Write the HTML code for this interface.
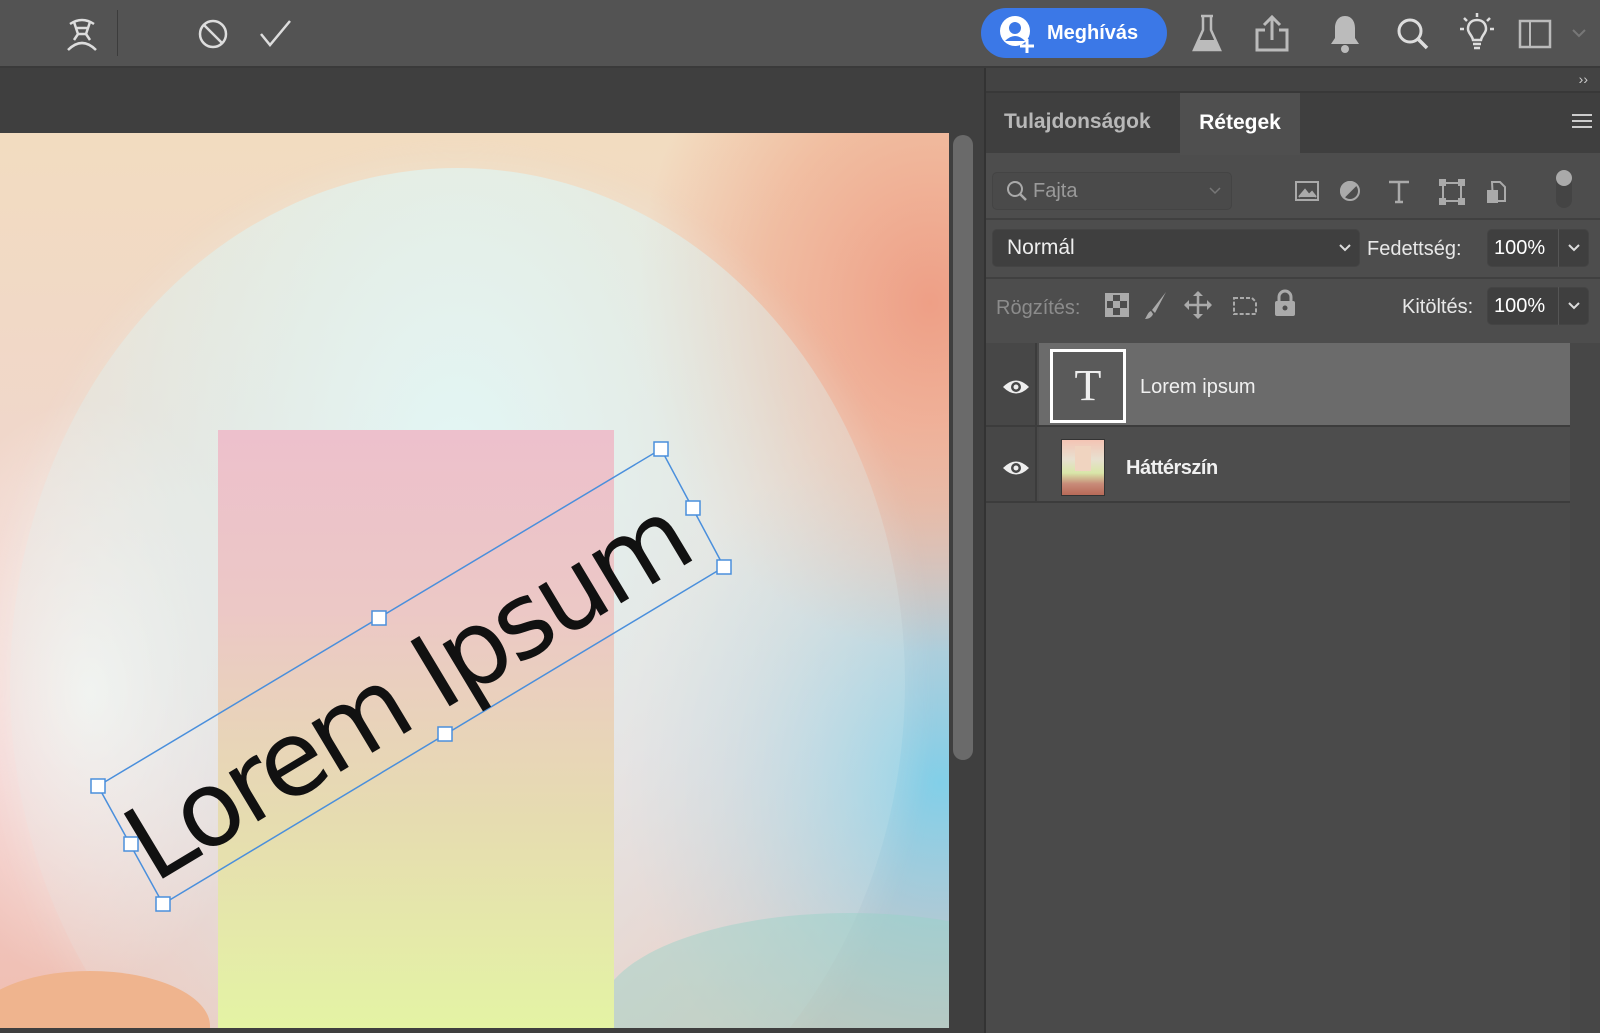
<!DOCTYPE html>
<html><head><meta charset="utf-8"><style>
*{margin:0;padding:0;box-sizing:border-box}
html,body{width:1600px;height:1033px;overflow:hidden}
body{background:#3f3f3f;font-family:"Liberation Sans",sans-serif;position:relative}
.abs{position:absolute}
#top{left:0;top:0;width:1600px;height:68px;background:#535353;border-bottom:2px solid #3a3a3a}
#btn{left:981px;top:8px;width:186px;height:50px;border-radius:25px;background:#3b78e7;color:#fff;font-size:20px;font-weight:bold;line-height:50px;padding-left:66px}
#canvas{left:0;top:133px;width:949px;height:895px;overflow:hidden;
background:
radial-gradient(ellipse 260px 420px at 90px 560px, rgba(255,250,245,.85), rgba(255,255,255,0) 70%),
radial-gradient(ellipse 420px 500px at 930px 170px, #ee9f86 0%, rgba(240,170,140,.6) 40%, rgba(255,255,255,0) 70%),
radial-gradient(ellipse 350px 400px at 940px 650px, #82cfe8 0%, rgba(130,205,230,.3) 60%, rgba(255,255,255,0) 90%),
linear-gradient(180deg,#f2dcc0 0%,#f0d6cc 40%,#f2c8c8 70%,#efbfb1 100%)}
#circle{left:10px;top:35px;width:895px;height:1030px;border-radius:50%;background:radial-gradient(ellipse at 50% 30%, rgba(225,250,250,.9) 0%, rgba(220,245,245,.55) 45%, rgba(225,240,240,.2) 80%);box-shadow:0 0 30px 10px rgba(230,245,245,.15)}
#rect{left:218px;top:297px;width:396px;height:600px;background:linear-gradient(180deg,#edc0cc 0%,#ecc8c6 30%,#e6dcb0 65%,#e4f4a4 100%)}
#panel{left:984px;top:68px;width:616px;height:965px;background:#4d4d4d;border-left:2px solid #333;overflow:hidden}
.ic{stroke:#ddd;fill:none;stroke-width:2.5}
.lbl{color:#e8e8e8;font-size:20px}
</style></head><body>
<div id="top" class="abs">
 <svg class="abs" style="left:64px;top:14px" width="36" height="38" viewBox="0 0 36 38"><g class="ic" stroke-width="2.5"><path d="M6 10 Q18 2 30 10"/><path d="M10 8 L14 20 L22 20 L26 8"/><path d="M13 14h10"/><path d="M14 20 L10 26"/><path d="M22 20 L26 26"/><path d="M4 36 Q18 22 32 36"/></g></svg>
 <div class="abs" style="left:117px;top:10px;width:1px;height:46px;background:#3c3c3c"></div>
 <svg class="abs" style="left:196px;top:17px" width="34" height="34" viewBox="0 0 34 34"><circle cx="17" cy="17" r="13" class="ic" stroke-width="3"/><path d="M8 8 L26 26" class="ic" stroke-width="3"/></svg>
 <svg class="abs" style="left:258px;top:17px" width="36" height="32" viewBox="0 0 36 32"><path d="M3 17 L12 28 L32 4" class="ic" stroke-width="3"/></svg>
 <div id="btn" class="abs">Meghívás
  <svg class="abs" style="left:18px;top:7px" width="40" height="40" viewBox="0 0 40 40"><circle cx="16" cy="16" r="15" fill="#fff"/><circle cx="16" cy="13" r="6" fill="#3b78e7"/><path d="M6 26 Q16 16 26 26" fill="#3b78e7"/><path d="M28 24v14M21 31h14" stroke="#fff" stroke-width="3"/></svg>
 </div>
 <svg class="abs" style="left:1191px;top:14px" width="32" height="40" viewBox="0 0 32 40"><path d="M10 2h12M12 2v14L3 36h26L20 16V2" fill="none" stroke="#bbb" stroke-width="2.5"/><path d="M7 26h18l4 10H3z" fill="#bbb"/></svg>
 <svg class="abs" style="left:1254px;top:14px" width="36" height="38" viewBox="0 0 36 38"><path d="M11 16H3v20h30V16h-8" fill="none" stroke="#bbb" stroke-width="3"/><path d="M18 26V3M10 11l8-8 8 8" fill="none" stroke="#bbb" stroke-width="3"/></svg>
 <svg class="abs" style="left:1329px;top:14px" width="32" height="40" viewBox="0 0 32 40"><path d="M16 2c-7 0-10 6-10 12v10l-4 6h28l-4-6V14c0-6-3-12-10-12z" fill="#bbb"/><circle cx="16" cy="35" r="4" fill="#bbb"/></svg>
 <svg class="abs" style="left:1396px;top:17px" width="34" height="34" viewBox="0 0 34 34"><circle cx="14" cy="14" r="11" fill="none" stroke="#ddd" stroke-width="3"/><path d="M22 22l9 9" stroke="#ddd" stroke-width="3.5"/></svg>
 <svg class="abs" style="left:1459px;top:12px" width="36" height="40" viewBox="0 0 36 40"><path d="M18 8c-6 0-9 4-9 9 0 4 4 6 5 11h8c1-5 5-7 5-11 0-5-3-9-9-9z" fill="none" stroke="#ddd" stroke-width="2.5"/><path d="M14 32h8M15 36h6M18 1v4M5 6l3 3M31 6l-3 3M1 17h4M31 17h4" stroke="#ddd" stroke-width="2.5"/></svg>
 <svg class="abs" style="left:1518px;top:19px" width="34" height="30" viewBox="0 0 34 30"><rect x="2" y="2" width="30" height="26" fill="none" stroke="#bbb" stroke-width="2.5"/><path d="M12 2v26" stroke="#bbb" stroke-width="2"/></svg>
 <svg class="abs" style="left:1571px;top:27px" width="16" height="12" viewBox="0 0 16 12"><path d="M2 3l6 6 6-6" fill="none" stroke="#777" stroke-width="2"/></svg>
</div>

<div id="canvas" class="abs">
 <div id="circle" class="abs"></div>
 <div class="abs" style="left:600px;top:780px;width:500px;height:200px;border-radius:50%;background:rgba(150,210,200,.45)"></div>
 <div class="abs" style="left:-30px;top:838px;width:240px;height:110px;border-radius:50%;background:#efb48e"></div>
 <div id="rect" class="abs"></div>
 <svg class="abs" style="left:0;top:0" width="949" height="895">
  <polygon points="98,653 661,316 724,434 163,771" fill="none" stroke="#4a8fdc" stroke-width="1.5"/>
  <g fill="#fff" stroke="#4a8fdc" stroke-width="1.5">
   <rect x="654" y="309" width="14" height="14"/><rect x="717" y="427" width="14" height="14"/>
   <rect x="156" y="764" width="14" height="14"/><rect x="91" y="646" width="14" height="14"/>
   <rect x="372" y="478" width="14" height="14"/><rect x="438" y="594" width="14" height="14"/>
   <rect x="686" y="368" width="14" height="14"/><rect x="124" y="704" width="14" height="14"/>
  </g>
 </svg>
 <div class="abs" style="left:79px;top:490px;width:656px;height:135px;transform:rotate(-31deg);font-size:104px;line-height:135px;color:#111;text-align:center;white-space:nowrap;font-family:'DejaVu Sans',sans-serif;letter-spacing:-4px">Lorem Ipsum</div>
</div>
<div class="abs" style="left:953px;top:135px;width:20px;height:625px;border-radius:10px;background:#6a6a6a"></div>

<div id="panel" class="abs">
 <div class="abs" style="left:0;top:0;width:616px;height:25px;background:#434343;border-bottom:2px solid #383838;color:#ccc;font-size:14px;text-align:right;padding-right:14px;line-height:22px">››</div>
 <div class="abs" style="left:0;top:25px;width:616px;height:60px;background:#3f3f3f"></div>
 <div class="abs" style="left:18px;top:42px;color:#b8b8b8;font-size:21px;font-weight:bold">Tulajdonságok</div>
 <div class="abs" style="left:194px;top:25px;width:120px;height:62px;background:#4f4f4f;color:#fff;font-size:21px;font-weight:bold;text-align:center;line-height:60px">Rétegek</div>
 <div class="abs" style="left:586px;top:46px;width:20px;height:14px;border-top:2px solid #ccc;border-bottom:2px solid #ccc"></div>
 <div class="abs" style="left:586px;top:52px;width:20px;height:2px;background:#ccc"></div>
 <div class="abs" style="left:6px;top:104px;width:240px;height:38px;border:1px solid #444;border-radius:5px;background:#4a4a4a;color:#9a9a9a;font-size:20px;line-height:36px;padding-left:40px">Fajta</div>
 <svg class="abs" style="left:20px;top:112px" width="22" height="22" viewBox="0 0 22 22"><circle cx="9" cy="9" r="7" fill="none" stroke="#aaa" stroke-width="2"/><path d="M14 14l6 6" stroke="#aaa" stroke-width="2.5"/></svg>
 <svg class="abs" style="left:222px;top:118px" width="14" height="10"><path d="M2 2l5 5 5-5" fill="none" stroke="#777" stroke-width="1.5"/></svg>
 <svg class="abs" style="left:308px;top:110px" width="230" height="28" viewBox="0 0 230 28">
  <g fill="none" stroke="#aaa" stroke-width="2"><rect x="2" y="4" width="22" height="18"/><path d="M5 19l6-7 4 5 3-3 4 5" fill="#aaa"/>
  <circle cx="56" cy="13" r="9"/><path d="M56 4a9 9 0 0 0 0 18z" fill="#aaa" transform="rotate(45 56 13)"/>
  <path d="M95 4h20M105 4v20M101 24h8" stroke-width="2.5"/>
  <rect x="149" y="5" width="18" height="18"/><rect x="146" y="2" width="5" height="5" fill="#aaa"/><rect x="165" y="2" width="5" height="5" fill="#aaa"/><rect x="146" y="21" width="5" height="5" fill="#aaa"/><rect x="165" y="21" width="5" height="5" fill="#aaa"/>
  <path d="M198 4h8l5 5v14h-12z"/><rect x="194" y="13" width="9" height="11" fill="#aaa"/></g>
 </svg>
 <div class="abs" style="left:570px;top:102px;width:16px;height:38px;border-radius:8px;background:#444"></div>
 <div class="abs" style="left:570px;top:102px;width:16px;height:16px;border-radius:8px;background:#aaa"></div>
 <div class="abs" style="left:0;top:150px;width:616px;height:2px;background:#404040"></div>
 <div class="abs" style="left:6px;top:161px;width:368px;height:38px;border:1px solid #444;border-radius:5px;background:#3f3f3f;color:#eee;font-size:21px;line-height:36px;padding-left:14px">Normál</div>
 <svg class="abs" style="left:352px;top:175px" width="14" height="10"><path d="M2 2l5 5 5-5" fill="none" stroke="#ddd" stroke-width="2"/></svg>
 <div class="abs lbl" style="left:381px;top:170px">Fedettség:</div>
 <div class="abs" style="left:501px;top:161px;width:102px;height:38px;border:1px solid #444;border-radius:5px;background:#3f3f3f;color:#fff;font-size:20px;line-height:36px;padding-left:6px">100%</div>
 <div class="abs" style="left:572px;top:161px;width:1px;height:38px;background:#555"></div>
 <svg class="abs" style="left:581px;top:175px" width="14" height="10"><path d="M2 2l5 5 5-5" fill="none" stroke="#ddd" stroke-width="2"/></svg>
 <div class="abs" style="left:0;top:209px;width:616px;height:2px;background:#404040"></div>
 <div class="abs" style="left:10px;top:229px;color:#8c8c8c;font-size:20px">Rögzítés:</div>
 <svg class="abs" style="left:118px;top:222px" width="180" height="30" viewBox="0 0 180 30">
  <g fill="#aaa"><rect x="2" y="4" width="22" height="22" fill="none" stroke="#aaa" stroke-width="2"/><rect x="2" y="4" width="7" height="7"/><rect x="16" y="4" width="7" height="7"/><rect x="9" y="11" width="7" height="7"/><rect x="2" y="18" width="7" height="7"/><rect x="16" y="18" width="7" height="7"/>
  <path d="M62 2L48 20l3 3z"/><path d="M47 21c-3 1-4 5-6 8 4 0 7-2 8-5z"/>
  <path d="M94 2v26M81 15h26" stroke="#aaa" stroke-width="2.5"/><path d="M94 1l-5 5h10zM94 29l-5-5h10zM80 15l5-5v10zM108 15l-5-5v10z"/>
  <path d="M130 8h18l4 4v12h-22z" fill="none" stroke="#aaa" stroke-width="2" stroke-dasharray="4 2"/></g>
 </svg>
 <svg class="abs" style="left:287px;top:220px" width="24" height="30" viewBox="0 0 24 30"><path d="M6 13V9a6 6 0 0 1 12 0v4" fill="none" stroke="#aaa" stroke-width="3"/><rect x="2" y="13" width="20" height="15" rx="2" fill="#aaa"/><circle cx="12" cy="20" r="2.5" fill="#4d4d4d"/></svg>
 <div class="abs lbl" style="left:416px;top:228px">Kitöltés:</div>
 <div class="abs" style="left:501px;top:219px;width:102px;height:38px;border:1px solid #444;border-radius:5px;background:#3f3f3f;color:#fff;font-size:20px;line-height:36px;padding-left:6px">100%</div>
 <div class="abs" style="left:572px;top:219px;width:1px;height:38px;background:#555"></div>
 <svg class="abs" style="left:581px;top:233px" width="14" height="10"><path d="M2 2l5 5 5-5" fill="none" stroke="#ddd" stroke-width="2"/></svg>
 <div class="abs" style="left:0;top:275px;width:616px;height:690px;background:#474747"></div>
 <div class="abs" style="left:0;top:275px;width:584px;height:672px;background:#4a4a4a"></div>
 <div class="abs" style="left:0;top:275px;width:51px;height:158px;background:#474747;border-right:2px solid #3c3c3c"></div>
 <div class="abs" style="left:53px;top:275px;width:531px;height:82px;background:#6b6b6b"></div>
 <div class="abs" style="left:0;top:357px;width:584px;height:2px;background:#3c3c3c"></div>
 <div class="abs" style="left:53px;top:359px;width:531px;height:74px;background:#4d4d4d"></div>
 <div class="abs" style="left:0;top:433px;width:584px;height:2px;background:#3c3c3c"></div>
 <div class="abs" style="left:0;top:435px;width:584px;height:530px;background:#4a4a4a"></div>
 <svg class="abs" style="left:16px;top:310px" width="28" height="18" viewBox="0 0 28 18"><path d="M1 9Q14-4 27 9Q14 22 1 9z" fill="#eee"/><circle cx="14" cy="9" r="5" fill="#474747"/><circle cx="14" cy="9" r="2.5" fill="#eee"/></svg>
 <svg class="abs" style="left:16px;top:391px" width="28" height="18" viewBox="0 0 28 18"><path d="M1 9Q14-4 27 9Q14 22 1 9z" fill="#eee"/><circle cx="14" cy="9" r="5" fill="#474747"/><circle cx="14" cy="9" r="2.5" fill="#eee"/></svg>
 <div class="abs" style="left:64px;top:281px;width:76px;height:74px;border:3px solid #fff;background:#5a5a5a;color:#eee;font-family:'Liberation Serif',serif;font-size:44px;text-align:center;line-height:68px">T</div>
 <div class="abs" style="left:154px;top:308px;color:#f0f0f0;font-size:20px">Lorem ipsum</div>
 <div class="abs" style="left:75px;top:371px;width:44px;height:57px;border:1px solid #333;background:linear-gradient(180deg,#f4c4b4 0%,#e8e0d0 35%,#d9e6a8 60%,#c88a78 80%,#b86a58 100%)"></div>
 <div class="abs" style="left:89px;top:378px;width:16px;height:25px;background:#f0d4c0"></div>
 <div class="abs" style="left:140px;top:389px;color:#f0f0f0;font-size:20px;font-weight:bold;letter-spacing:-0.5px">Háttérszín</div>
</div>
</body></html>
